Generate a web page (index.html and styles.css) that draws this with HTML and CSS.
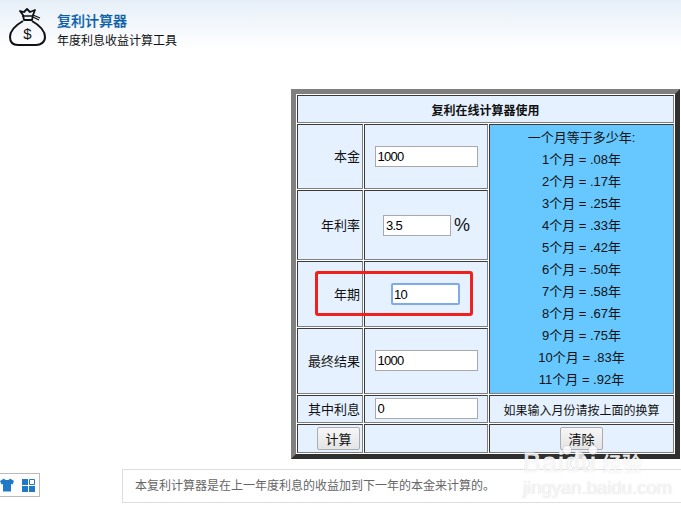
FILE: index.html
```html
<!DOCTYPE html>
<html lang="zh">
<head>
<meta charset="utf-8">
<title>复利计算器</title>
<link rel="stylesheet" href="styles.css">
</head>
<body>
<header class="head">
  <svg class="bag" viewBox="0 0 38 38" width="38" height="38" aria-hidden="true">
    <path d="M11 3l4 1 3-3 3 3 5-2-2 5-1 5h-8l-1-5z" fill="none" stroke="#111" stroke-width="1.8" stroke-linejoin="round"/>
    <path d="M13 8h11M24 7l7 3M24 9l6 3" fill="none" stroke="#111" stroke-width="1.3"/>
    <path d="M14 13C7 17 1 23 1 29c0 5 3 8 8 8h18c5 0 9-3 9-8 0-6-6-12-13-16" fill="none" stroke="#111" stroke-width="2"/>
    <text x="18.5" y="31" class="dollar">$</text>
  </svg>
  <div class="head-text">
    <div class="app-name">复利计算器</div>
    <div class="app-sub">年度利息收益计算工具</div>
  </div>
</header>
<main class="stage">
  <table class="calc">
    <colgroup><col class="c1"><col class="c2"><col class="c3"></colgroup>
    <tr class="r-title"><th colspan="3">复利在线计算器使用</th></tr>
    <tr class="r-a">
      <td class="lab">本金</td>
      <td class="mid"><input class="field wide" value="1000"></td>
      <td class="months" rowspan="4">
        <p>一个月等于多少年:</p>
        <p>1个月 = .08年</p>
        <p>2个月 = .17年</p>
        <p>3个月 = .25年</p>
        <p>4个月 = .33年</p>
        <p>5个月 = .42年</p>
        <p>6个月 = .50年</p>
        <p>7个月 = .58年</p>
        <p>8个月 = .67年</p>
        <p>9个月 = .75年</p>
        <p>10个月 = .83年</p>
        <p>11个月 = .92年</p>
      </td>
    </tr>
    <tr class="r-b">
      <td class="lab">年利率</td>
      <td class="mid"><input class="field narrow" value="3.5"><span class="pct">%</span></td>
    </tr>
    <tr class="r-c">
      <td class="lab">年期</td>
      <td class="mid"><input class="field narrow focus" value="10"></td>
    </tr>
    <tr class="r-d">
      <td class="lab">最终结果</td>
      <td class="mid"><input class="field wide" value="1000"></td>
    </tr>
    <tr class="r-e">
      <td class="lab">其中利息</td>
      <td class="mid"><input class="field wide" value="0"></td>
      <td class="center">如果输入月份请按上面的换算</td>
    </tr>
    <tr class="r-f">
      <td class="lab"><button class="btn">计算</button></td>
      <td class="mid"></td>
      <td class="center"><button class="btn">清除</button></td>
    </tr>
  </table>
  <div class="redbox"></div>
</main>
<footer class="foot">
  <div class="tools">
    <svg width="14" height="14" viewBox="0 0 14 14" aria-hidden="true"><path d="M4 0.5L0 3l1.5 3.5L3 6v7.5h8V6l1.5.5L14 3 10 .5C9 2.5 5 2.5 4 .5z" fill="#1f78c8"/></svg>
    <svg width="13" height="13" viewBox="0 0 13 13" aria-hidden="true"><path d="M0 0h6v6H0zM0 7h6v6H0zM7 7h6v6H7z" fill="#1f78c8"/><path d="M7.5.5h5v5h-5z" fill="none" stroke="#1f78c8"/></svg>
  </div>
  <div class="note">本复利计算器是在上一年度利息的收益加到下一年的本金来计算的。</div>
</footer>
<div class="mark">
  <svg class="paw-icon" width="44" height="34" viewBox="0 0 44 34" aria-hidden="true">
    <g fill="#fff" fill-opacity=".8" stroke="#999" stroke-opacity=".3">
      <ellipse cx="8" cy="9" rx="4.5" ry="4.5"/>
      <ellipse cx="34" cy="9" rx="4.5" ry="4.5"/>
      <path d="M21 11c-4 0-5 5-8 8-3 4-1 9 4 8h8c5 1 7-4 4-8-3-3-4-8-8-8z"/>
    </g>
  </svg>
  <div class="mark-top"><span>Bai</span><span>du</span><span class="mark-cn">经验</span></div>
  <div class="mark-url">jingyan.baidu.com</div>
</div>
</body>
</html>
```

FILE: styles.css
```css
* { box-sizing: border-box; }
html, body { margin: 0; padding: 0; }
body {
  width: 681px;
  height: 510px;
  overflow: hidden;
  position: relative;
  background: #fff;
  font-family: "Liberation Sans", "Noto Sans CJK SC", sans-serif;
  color: #111;
}
.head {
  height: 89px;
  display: flex;
  align-items: flex-start;
  padding: 8px 0 0 9px;
  background: linear-gradient(#e6eff8 0, #fff 50px);
}
.bag { flex: none; }
.dollar { font: 15px "Liberation Sans", sans-serif; text-anchor: middle; fill: #111; }
.head-text { margin: 5px 0 0 10px; }
.app-name { font-size: 14px; font-weight: 500; line-height: 17px; color: #0b5fa8; -webkit-text-stroke: .2px #0b5fa8; }
.app-sub { font-size: 12px; line-height: 17px; margin-top: 3px; color: #111; }
.stage { position: relative; height: 370px; padding-left: 291px; }
.calc {
  width: 389px;
  height: 370px;
  table-layout: fixed;
  border-collapse: separate;
  border-spacing: 1px;
  border-style: solid;
  border-width: 5px;
  border-color: #808080 #2f2f2f #2f2f2f #808080;
  background: #fff;
  font-size: 13px;
}
.c1 { width: 66px; }
.c2 { width: 124px; }
.c3 { width: 185px; }
.calc td, .calc th {
  padding: 0;
  border-style: solid;
  border-width: 1px;
  border-color: #3a3a3a #808080 #808080 #3a3a3a;
  background: #e6f1ff;
}
.calc th { font-size: 12px; font-weight: 700; text-align: center; }
.r-title { height: 28px; }
.r-a { height: 65px; }
.r-b { height: 70px; }
.r-c { height: 66px; }
.r-d { height: 66px; }
.r-e { height: 28px; }
.r-f { height: 29px; }
.calc .lab { text-align: right; padding-right: 2px; line-height: 15px; }
.mid { text-align: center; }
.calc .months {
  background: #66c8ff;
  text-align: center;
  vertical-align: middle;
}
.months p { margin: 0; line-height: 22px; }
.center { text-align: center; font-size: 12px; }
.field {
  height: 21px;
  padding: 1px 2px;
  border: 1px solid #a9a9a9;
  background: #fff;
  font: 13px "Liberation Sans", sans-serif;
  letter-spacing: -.7px;
  color: #000;
  vertical-align: middle;
}
.r-d .field, .r-e .field { margin-bottom: 2px; }
.wide { width: 103px; }
.narrow { width: 68px; }
.focus { width: 69px; border: 2px solid #7eaaec; border-radius: 2px; height: 22px; padding: 0 1px; }
.pct { display: inline-block; width: 0; margin-left: 3px; font-size: 18px; line-height: 21px; vertical-align: middle; }
.calc .r-b .mid { text-align: left; padding-left: 18px; }
.calc .r-c .mid { text-align: left; padding-left: 26px; }
.btn {
  width: 43px;
  height: 23px;
  padding: 0;
  border: 1px solid #adadad;
  border-radius: 2px;
  background: linear-gradient(#f6f6f6, #e4e4e4);
  font: 13px "Liberation Sans", "Noto Sans CJK SC", sans-serif;
  color: #111;
}
.redbox {
  position: absolute;
  left: 315px;
  top: 182px;
  width: 158px;
  height: 45px;
  border: 3px solid #f0211c;
  border-radius: 3px;
  pointer-events: none;
}
.foot {
  display: flex;
  align-items: flex-start;
  height: 51px;
  padding-top: 10px;
}
.tools {
  display: flex;
  align-items: center;
  gap: 8px;
  width: 40px;
  height: 24px;
  margin-top: 4px;
  border: 1px solid #bbb;
  border-left: 0;
  flex: none;
}
.note {
  flex: none;
  width: 570px;
  height: 34px;
  margin-left: 82px;
  padding-left: 12px;
  border: 1px solid #ddd;
  font-size: 12px;
  line-height: 32px;
  color: #666;
}
.mark {
  position: absolute;
  left: 523px;
  top: 449px;
  width: 124px;
  color: rgba(255,255,255,.8);
  text-shadow: 0 0 1px rgba(120,120,120,.45);
  pointer-events: none;
}
.paw-icon { position: absolute; left: 36px; top: -8px; }
.mark-top { position: relative; display: flex; align-items: baseline; font-size: 27px; letter-spacing: 1px; line-height: 28px; white-space: nowrap; -webkit-text-stroke: .8px rgba(255,255,255,.8); }
.mark-cn { font-size: 20px; margin-left: 5px; letter-spacing: 0; }
.mark-url { font-size: 18.5px; line-height: 20px; margin-top: -1px; white-space: nowrap; -webkit-text-stroke: .3px rgba(255,255,255,.8); }
```
